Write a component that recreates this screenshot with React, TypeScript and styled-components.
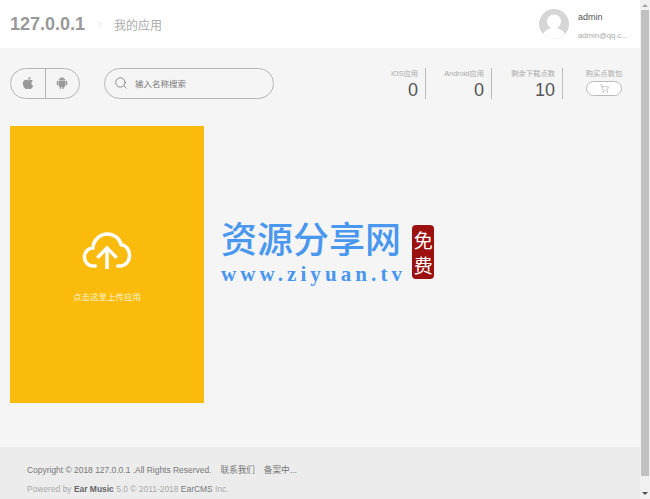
import styled, { createGlobalStyle } from "styled-components";
import { FaApple } from "react-icons/fa";
import { AiFillAndroid } from "react-icons/ai";
import { Search, ShoppingCart, ChevronRight } from "lucide-react";

const GlobalStyle = createGlobalStyle`
  html, body {
    margin: 0;
    padding: 0;
    height: 499px;
    overflow: hidden;
    background: #f5f5f5;
  }
  * { box-sizing: border-box; }
`;

const CJK = `"Liberation Sans", "Noto Sans CJK SC", sans-serif`;

const Page = styled.div`
  position: relative;
  display: flex;
  width: 650px;
  height: 499px;
  font-family: ${CJK};
`;

const Main = styled.div`
  width: 640px;
  height: 499px;
  display: flex;
  flex-direction: column;
`;

const Header = styled.header`
  height: 48px;
  background: #fff;
  display: flex;
  align-items: center;
  padding-left: 10px;
`;

const Brand = styled.div`
  font-size: 18px;
  font-weight: bold;
  color: #999;
  width: 84px;
`;

const Crumb = styled.div`
  display: flex;
  align-items: center;
  color: #ccc;
  width: 20px;
`;

const PageName = styled.div`
  font-size: 12px;
  color: #aaa;
`;

const User = styled.div`
  margin-left: auto;
  width: 100px;
  display: flex;
  align-items: center;
  gap: 9px;
  margin-right: 1px;
`;

const Avatar = styled.svg`
  width: 30px;
  height: 30px;
  flex: none;
`;

const UserText = styled.div`
  display: flex;
  flex-direction: column;
  gap: 9px;
  padding-top: 3px;
`;

const UserName = styled.div`
  font-size: 9px;
  color: #555;
`;

const UserMail = styled.div`
  font-size: 7.7px;
  color: #aaa;
  white-space: nowrap;
`;

const Toolbar = styled.div`
  height: 70px;
  display: flex;
  align-items: center;
  padding: 0 18px 0 10px;
`;

const Platforms = styled.div`
  width: 70px;
  height: 31px;
  border: 1px solid #b5b5b5;
  border-radius: 16px;
  display: flex;
  flex: none;
`;

const Platform = styled.div<{ $divided?: boolean }>`
  flex: 1;
  display: flex;
  align-items: center;
  justify-content: center;
  color: #999;
  font-size: 14px;
  border-right: ${(p) => (p.$divided ? "1px solid #b5b5b5" : "none")};
`;

const SearchBox = styled.div`
  width: 170px;
  height: 31px;
  margin-left: 24px;
  border: 1px solid #b5b5b5;
  border-radius: 16px;
  display: flex;
  align-items: center;
  gap: 7px;
  padding-left: 9px;
  color: #777;
  font-size: 8.5px;
  flex: none;
`;

const Stats = styled.div`
  margin-left: auto;
  display: flex;
`;

const Stat = styled.div<{ $w: number }>`
  width: ${(p) => p.$w}px;
  height: 31px;
  display: flex;
  flex-direction: column;
  align-items: flex-end;
  padding-right: 7px;
  border-right: 1px solid #bbb;
`;

const StatLabel = styled.div`
  font-size: 7.3px;
  line-height: 10px;
  margin-top: 1px;
  color: #aaa;
  white-space: nowrap;
`;

const StatValue = styled.div`
  font-size: 18px;
  line-height: 20px;
  margin-top: 1px;
  color: #555;
`;

const BuyCol = styled.div`
  width: 36px;
  margin-left: 23px;
  height: 31px;
  display: flex;
  flex-direction: column;
  align-items: center;
`;

const BuyButton = styled.div`
  width: 36px;
  height: 15px;
  margin-top: 2px;
  border: 1px solid #bbb;
  border-radius: 8px;
  background: #fff;
  color: #999;
  display: flex;
  align-items: center;
  justify-content: center;
`;

const Content = styled.div`
  flex: 1;
  padding: 8px 0 0 10px;
`;

const UploadCard = styled.div`
  width: 194px;
  height: 277px;
  background: #fbbb0c;
  display: flex;
  flex-direction: column;
  align-items: center;
  padding-top: 106px;
`;

const UploadLabel = styled.div`
  margin-top: 21px;
  font-size: 8.5px;
  color: #fff3cf;
`;

const Footer = styled.footer`
  height: 52px;
  background: #ececec;
  padding: 18px 0 0 27px;
  font-size: 8.45px;
  color: #777;
  display: flex;
  flex-direction: column;
  gap: 9px;
`;

const FooterLine = styled.div`
  display: flex;
  line-height: 10px;
  white-space: pre;
`;

const FooterLink = styled.span`
  margin-left: 9px;
  font-size: 8.6px;
`;

const Muted = styled.span`
  color: #aaa;
`;

const Strong = styled.b`
  color: #666;
`;

const ScrollTrack = styled.div`
  width: 10px;
  height: 499px;
  background: #f1f1f1;
  display: flex;
  flex-direction: column;
  align-items: center;
  justify-content: space-between;
  padding: 4px 0;
`;

const Thumb = styled.div`
  position: absolute;
  top: 10px;
  left: 641px;
  width: 8px;
  height: 466px;
  background: #c1c1c1;
`;

const Arrow = styled.div<{ $down?: boolean }>`
  width: 0;
  height: 0;
  border-left: 3px solid transparent;
  border-right: 3px solid transparent;
  ${(p) =>
    p.$down
      ? "border-top: 3px solid #505050;"
      : "border-bottom: 3px solid #a3a3a3;"}
`;

const Watermark = styled.div`
  position: absolute;
  left: 221px;
  top: 219px;
  display: flex;
  align-items: flex-start;
  gap: 6px;
`;

const MarkText = styled.div`
  color: #4a97f0;
  display: flex;
  flex-direction: column;
`;

const MarkTitle = styled.div`
  font-family: ${CJK};
  font-weight: 500;
  font-size: 36px;
  line-height: 44px;
  white-space: nowrap;
`;

const MarkUrl = styled.div`
  font-family: "Liberation Serif", serif;
  font-size: 21px;
  line-height: 20px;
  margin-top: 1px;
  letter-spacing: 4.1px;
  font-weight: bold;
  white-space: nowrap;
`;

const Seal = styled.div`
  width: 22px;
  height: 54px;
  margin-top: 6px;
  padding-top: 2px;
  background: #9c1010;
  border-radius: 4px;
  color: #fff;
  font-family: "Noto Sans CJK SC", sans-serif;
  font-size: 19px;
  line-height: 25px;
  text-align: center;
`;

export default function App() {
  return (
    <Page>
      <GlobalStyle />
      <Main>
        <Header>
          <Brand>127.0.0.1</Brand>
          <Crumb>
            <ChevronRight size={12} strokeWidth={1.2} />
          </Crumb>
          <PageName>我的应用</PageName>
          <User>
            <Avatar viewBox="0 0 30 30">
              <circle cx="15" cy="15" r="15" fill="#d6d6d6" />
              <circle cx="15" cy="12.5" r="7" fill="#fff" />
              <path d="M4 25c3-5 7-6 11-6s8 1 11 6a15 15 0 0 1-22 0z" fill="#fff" />
            </Avatar>
            <UserText>
              <UserName>admin</UserName>
              <UserMail>admin@qq.c...</UserMail>
            </UserText>
          </User>
        </Header>
        <Toolbar>
          <Platforms>
            <Platform $divided>
              <FaApple />
            </Platform>
            <Platform>
              <AiFillAndroid />
            </Platform>
          </Platforms>
          <SearchBox>
            <Search size={14} strokeWidth={1.4} />
            输入名称搜索
          </SearchBox>
          <Stats>
            <Stat $w={36}>
              <StatLabel>iOS应用</StatLabel>
              <StatValue>0</StatValue>
            </Stat>
            <Stat $w={66}>
              <StatLabel>Android应用</StatLabel>
              <StatValue>0</StatValue>
            </Stat>
            <Stat $w={71}>
              <StatLabel>剩余下载点数</StatLabel>
              <StatValue>10</StatValue>
            </Stat>
            <BuyCol>
              <StatLabel>购买点数包</StatLabel>
              <BuyButton>
                <ShoppingCart size={9} strokeWidth={1.4} />
              </BuyButton>
            </BuyCol>
          </Stats>
        </Toolbar>
        <Content>
          <UploadCard>
            <svg width="50" height="37" viewBox="0 0 50 38" fill="none" stroke="#fff" strokeWidth="3.6">
              <path d="M13 35H11C5 35 1.8 30 1.8 25.5C1.8 20 6 16.5 10.5 16.5C11 8 18 2 25.5 2C32 2 38 6.5 39.5 13C44.5 13.5 48.2 18.5 48.2 24C48.2 30 44 35 38 35H36" strokeLinecap="round" />
              <path d="M25 38V17" />
              <path d="M15 26.5L25 16.5L35 26.5" />
            </svg>
            <UploadLabel>点击这里上传应用</UploadLabel>
          </UploadCard>
        </Content>
        <Footer>
          <FooterLine>
            Copyright © 2018 127.0.0.1 .All Rights Reserved.
            <FooterLink>联系我们</FooterLink>
            <FooterLink>备案中...</FooterLink>
          </FooterLine>
          <FooterLine>
            <Muted>Powered by </Muted>
            <Strong>Ear Music</Strong>
            <Muted> 5.0 © 2011-2018 </Muted>
            EarCMS
            <Muted> Inc.</Muted>
          </FooterLine>
        </Footer>
      </Main>
      <ScrollTrack>
        <Arrow />
        <Arrow $down />
      </ScrollTrack>
      <Thumb />
      <Watermark>
        <MarkText>
          <MarkTitle>资源分享网</MarkTitle>
          <MarkUrl>www.ziyuan.tv</MarkUrl>
        </MarkText>
        <Seal>
          免
          <br />
          费
        </Seal>
      </Watermark>
    </Page>
  );
}
